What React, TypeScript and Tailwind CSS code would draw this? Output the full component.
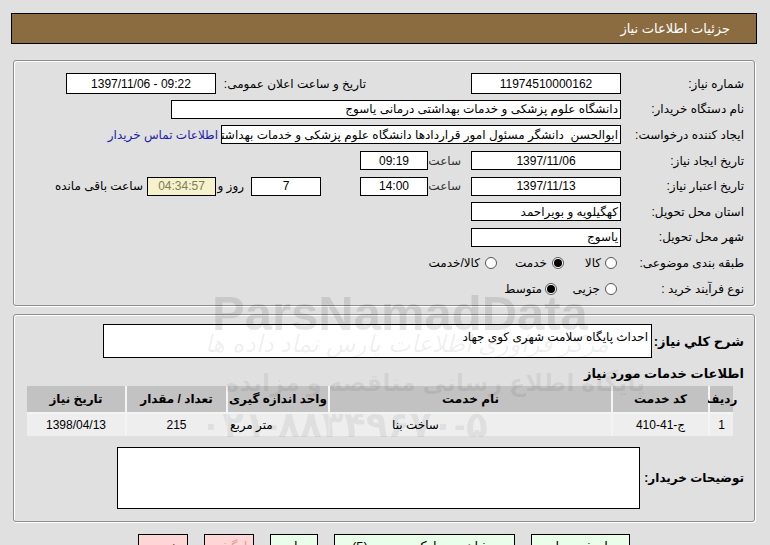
import React from "react";

const box = "bg-white border border-black h-[19px] flex items-center justify-center overflow-hidden whitespace-nowrap";

function Radio({ on }: { on?: boolean }) {
    return (
        <span className="w-[12px] h-[12px] rounded-full border border-[#555] bg-white flex items-center justify-center shrink-0">
            {on && <span className="w-[8px] h-[8px] rounded-full bg-black" />}
        </span>
    );
}

function Row({ label, children }: { label: string; children?: React.ReactNode }) {
    return (
        <div className="h-[25.6px] flex items-center">
            <div className="w-[123px] shrink-0 whitespace-nowrap">{label}</div>
            {children}
        </div>
    );
}

export default function App() {
    return (
        <div
            dir="rtl"
            className="relative min-h-screen overflow-hidden bg-[#e0e0e0] pt-[13px] pl-[11px] pr-[13px] text-[12px] text-black font-['Liberation_Sans','DejaVu_Sans',sans-serif]"
        >
            {/* title bar */}
            <div className="h-[31px] bg-[#8b6c41] border border-black flex items-center pr-[26px] text-white text-[13px]">
                جزئیات اطلاعات نیاز
            </div>

            {/* main info */}
            <div className="mt-[16px] mx-[2px] border border-[#8e8e8e] rounded-[3px] shadow-[inset_1px_1px_0_#fff,1px_1px_0_#fff] pt-[10px] pr-[10px] pb-[4px]">
                <Row label="شماره نیاز:">
                    <div className={`${box} w-[150px] h-[21px]`}>11974510000162</div>
                    <div className="w-[150px] mr-[105px] whitespace-nowrap">تاریخ و ساعت اعلان عمومی:</div>
                    <div dir="ltr" className={`${box} w-[150px] h-[21px]`}>1397/11/06 - 09:22</div>
                </Row>
                <Row label="نام دستگاه خریدار:">
                    <div className={`${box} w-[450px] !justify-start pr-[2px]`}>دانشگاه علوم پزشکی و خدمات بهداشتی درمانی یاسوج</div>
                </Row>
                <Row label="ایجاد کننده درخواست:">
                    <div className={`${box} w-[400px] !justify-start pr-[2px] whitespace-pre`}>ابوالحسن  دانشگر مسئول امور قراردادها دانشگاه علوم پزشکی و خدمات بهداشتی درمانی یاسوج</div>
                    <a className="mr-[3px] text-[#1c1ca8] whitespace-nowrap">اطلاعات تماس خریدار</a>
                </Row>
                <Row label="تاریخ ایجاد نیاز:">
                    <div className={`${box} w-[150px]`}>1397/11/06</div>
                    <div className="w-[43px] pr-[10px] text-[#333]">ساعت</div>
                    <div className={`${box} w-[68px]`}>09:19</div>
                </Row>
                <Row label="تاریخ اعتبار نیاز:">
                    <div className={`${box} w-[150px]`}>1397/11/13</div>
                    <div className="w-[43px] pr-[10px] text-[#333]">ساعت</div>
                    <div className={`${box} w-[68px]`}>14:00</div>
                    <div className={`${box} w-[70px] mr-[39px]`}>7</div>
                    <div className="w-[35px] pr-[7px] whitespace-nowrap">روز و</div>
                    <div className={`${box} w-[69px] !bg-[#f6f2cc] text-[#7d7d5a]`}>04:34:57</div>
                    <div className="mr-[4px] whitespace-nowrap">ساعت باقی مانده</div>
                </Row>
                <Row label="استان محل تحویل:">
                    <div className={`${box} w-[150px] !justify-start pr-[2px]`}>کهگیلویه و بویراحمد</div>
                </Row>
                <Row label="شهر محل تحویل:">
                    <div className={`${box} w-[150px] !justify-start pr-[2px]`}>یاسوج</div>
                </Row>
                <Row label="طبقه بندی موضوعی:">
                    <div className="flex items-center mr-[4px] w-[53px] gap-[4px]"><Radio /><span>کالا</span></div>
                    <div className="flex items-center w-[67px] gap-[5px]"><Radio on /><span>خدمت</span></div>
                    <div className="flex items-center gap-[5px]"><Radio /><span>کالا/خدمت</span></div>
                </Row>
                <Row label="نوع فرآیند خرید :">
                    <div className="flex items-center mr-[4px] w-[60px] gap-[5px]"><Radio /><span>جزیی</span></div>
                    <div className="flex items-center gap-[3px]"><Radio on /><span>متوسط</span></div>
                </Row>
            </div>

            {/* description + services */}
            <div className="mt-[8px] mx-[2px] border border-[#8e8e8e] rounded-[3px] shadow-[inset_1px_1px_0_#fff,1px_1px_0_#fff] pt-[9px] pr-[10px] pb-[12px]">
                <div className="flex items-center">
                    <div className="w-[92px] shrink-0 font-bold text-[13px] whitespace-nowrap">شرح کلي نیاز:</div>
                    <div className="w-[549px] h-[34px] bg-white border border-black pt-[3px] pr-[3px]">احداث پایگاه سلامت شهری کوی جهاد</div>
                </div>
                <div className="mt-[9px] font-bold text-[13px] leading-[14px]">اطلاعات خدمات مورد نیاز</div>
                <div className="mt-[5px] mr-[11px] w-[706px] grid grid-cols-[23px_95px_281px_100px_99px_98px] gap-[2px] bg-[#f4f4f4] text-[12px]">
                    {["ردیف", "کد خدمت", "نام خدمت", "واحد اندازه گیری", "تعداد / مقدار", "تاریخ نیاز"].map((h) => (
                        <div key={h} className="h-[26px] bg-[#c2c2c2] flex items-center justify-center font-bold whitespace-nowrap">{h}</div>
                    ))}
                    <div className="h-[22px] bg-[#eeeeee] flex items-center justify-center">1</div>
                    <div className="h-[22px] bg-[#eeeeee] flex items-center justify-center">ج-41-410</div>
                    <div className="h-[22px] bg-[#eeeeee] flex items-center justify-end pl-[62px]">ساخت بنا</div>
                    <div className="h-[22px] bg-[#eeeeee] flex items-center justify-end pl-[2px]">متر مربع</div>
                    <div className="h-[22px] bg-[#eeeeee] flex items-center justify-center">215</div>
                    <div className="h-[22px] bg-[#eeeeee] flex items-center justify-center">1398/04/13</div>
                </div>
                <div className="mt-[11px] flex items-center">
                    <div className="w-[104px] shrink-0 font-bold text-[12px] whitespace-nowrap">توضیحات خریدار:</div>
                    <div className="w-[523px] h-[62px] bg-white border border-black" />
                </div>
            </div>

            {/* buttons */}
            <div className="mt-[12px] flex justify-center gap-[16px] text-[13px]">
                <div className="w-[99px] h-[24px] border border-black bg-[#eaffea] flex items-center justify-center">پاسخ به نیاز</div>
                <div className="w-[181px] h-[24px] border border-black bg-[#eaffea] flex items-center justify-center">مشاهده مدارک پیوستی (5)</div>
                <div className="w-[48px] h-[24px] border border-black bg-[#eaffea] flex items-center justify-center">چاپ</div>
                <div className="w-[50px] h-[24px] border border-black bg-[#ffd6d6] flex items-center justify-center text-[#e89a9a]">بازگشت</div>
                <div className="w-[50px] h-[24px] border border-black bg-[#ffd6d6] flex items-center justify-center text-[#7a2020]">خروج</div>
            </div>

            {/* watermark */}
            <div className="pointer-events-none absolute left-[212px] top-[277px] text-[49px] font-bold text-black/10 font-['Liberation_Sans',sans-serif]" dir="ltr">
                ParsNamadData
            </div>
            <div className="pointer-events-none absolute left-[205px] top-[326px] text-[24px] italic text-black/[0.07]">
                مرکز فراوری اطلاعات پارس نماد داده ها
            </div>
            <div className="pointer-events-none absolute left-[225px] top-[365px] text-[24px] font-bold text-black/[0.07]">
                پایگاه اطلاع رسانی مناقصه و مزایده
            </div>
            <div className="pointer-events-none absolute left-[200px] top-[398px] text-[36px] font-bold text-black/[0.07]" dir="ltr">
                ۰۲۱-۸۸۳۴۹۶۷۰-۵
            </div>
        </div>
    );
}
